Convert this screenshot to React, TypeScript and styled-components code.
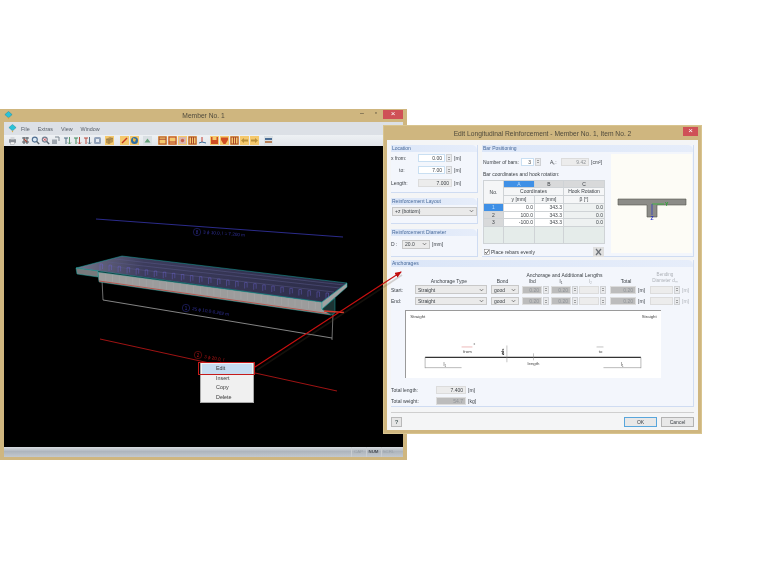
import React from 'react'
import styled, { createGlobalStyle, css } from 'styled-components'

const GlobalStyle = createGlobalStyle`
  html, body {
    margin: 0;
    padding: 0;
    background: #fff;
  }
  body {
    font-family: "Liberation Sans", Arial, sans-serif;
    color: #3d4247;
  }
`

type ToolKind = 'print' | 'cross' | 'zoom' | 'zoomRed' | 'frame' | 'axisG' | 'axisR' | 'axisB' | 'cube' | 'box' | 'pen' | 'globe' | 'tri' | 'band' | 'bandRed' | 'dot' | 'bars' | 'corner' | 'tee' | 'vee' | 'arrowL' | 'arrow' | 'flag'

const ToolGlyph = ({ kind }: { kind: ToolKind }) => {
  switch (kind) {
    case 'print':
      return <g><rect x="1" y="3" width="7" height="4" rx="1" fill="#8b9097" /><rect x="2.5" y="1" width="4" height="2.5" fill="#d6d9de" /><rect x="2.5" y="6" width="4" height="2.5" fill="#f4f4f4" stroke="#8b9097" strokeWidth=".4" /></g>
    case 'cross':
      return <g stroke="#5a6168" strokeWidth="1.1"><path d="M1 2h7M1 6h7M3 1v7M6 1v7" /><path d="M3 3l3 3" stroke="#b04b3a" /></g>
    case 'zoom':
      return <g fill="none" stroke="#4f6f92" strokeWidth="1.1"><circle cx="3.8" cy="3.6" r="2.5" fill="#dbe8f3" /><path d="M5.6 5.5l2.6 2.6" stroke="#5b6570" strokeWidth="1.4" /></g>
    case 'zoomRed':
      return <g fill="none" stroke="#6f7f92" strokeWidth="1.1"><circle cx="3.8" cy="3.6" r="2.5" fill="#f1dde0" /><path d="M2.6 2.4l2.4 2.4M5 2.4L2.6 4.8" stroke="#c23b45" strokeWidth=".8" /><path d="M5.6 5.5l2.6 2.6" stroke="#5b6570" strokeWidth="1.4" /></g>
    case 'frame':
      return <g><rect x="1" y="3.5" width="5" height="4.5" fill="#9da5ae" /><path d="M4 1h4v4" fill="none" stroke="#7b858f" /></g>
    case 'axisG':
      return <g fill="none" strokeWidth="1"><path d="M1 2h4M3 2v6" stroke="#4e6f83" /><path d="M6.5 1v7M5 6.5l1.5 1.5L8 6.5" stroke="#5c9a6a" /></g>
    case 'axisR':
      return <g fill="none" strokeWidth="1"><path d="M1 2h4M3 2v6" stroke="#3f8a58" /><path d="M6.5 1v7M5 6.5l1.5 1.5L8 6.5" stroke="#b94a3e" /></g>
    case 'axisB':
      return <g fill="none" strokeWidth="1"><path d="M1 2h4M3 2v6" stroke="#b94a3e" /><path d="M6.5 1v7M5 6.5l1.5 1.5L8 6.5" stroke="#4e6f83" /></g>
    case 'cube':
      return <g fill="#93a3bb"><rect x="1" y="1" width="7" height="7" rx="1.5" /><rect x="3" y="3" width="3" height="3" fill="#e6ebf2" /></g>
    case 'box':
      return <g><path d="M1 3l4-2 3 1v4l-4 2-3-1z" fill="#b9934f" /><path d="M1 3l3 1 4-2M4 4v4" fill="none" stroke="#7f6a45" strokeWidth=".5" /></g>
    case 'pen':
      return <path d="M2 7l5-5" stroke="#c73a22" strokeWidth="1.5" />
    case 'globe':
      return <g><circle cx="4.5" cy="4.5" r="3.5" fill="#2f6ea5" /><path d="M3 2l3 1-1 3-2-1z" fill="#e9b73e" /></g>
    case 'tri':
      return <path d="M4.5 2.5L7.5 6.5h-6z" fill="#62a078" />
    case 'band':
      return <g fill="none" stroke="#a8482c"><rect x="1" y="1" width="7" height="7" /><path d="M1 3.2h7" /></g>
    case 'bandRed':
      return <g fill="none" stroke="#b23c28"><rect x="1" y="1" width="7" height="7" /><path d="M1 6h7" /></g>
    case 'dot':
      return <g><rect x="1" y="1" width="7" height="7" fill="#d8b5ac" /><circle cx="4.5" cy="4.5" r="1.7" fill="#c65f4b" /></g>
    case 'bars':
      return <g fill="none" stroke="#a8482c"><rect x="1" y="1" width="7" height="7" /><path d="M3.5 1v7M5.5 1v7" /></g>
    case 'corner':
      return <g fill="none" strokeWidth="1"><path d="M4 1v5" stroke="#c43a2e" /><path d="M1 7l3-1 4 1" stroke="#3a6c9a" /></g>
    case 'tee':
      return <path d="M1 1h1.5v3h4V1H8v7H1z" fill="#cf4d22" />
    case 'vee':
      return <path d="M1 1.5h7V4L5.5 8h-2L1 4z" fill="#cf4d22" />
    case 'arrowL':
      return <path d="M8 3.5H4V2L1 4.5 4 7V5.5h4z" fill="#b9903a" />
    case 'arrow':
      return <path d="M1 3.5h4V2l3 2.5L5 7V5.5H1z" fill="#b9903a" />
    case 'flag':
      return <g><rect x="1" y="2" width="7" height="2" fill="#4a6c93" /><rect x="1" y="5" width="7" height="2" fill="#b9825a" /></g>
  }
}

const toolGroups: { gap: number; tools: { kind: ToolKind; lit?: boolean; wash?: boolean }[] }[] = [
  { gap: 3, tools: [{ kind: 'print' }] },
  { gap: 4, tools: [{ kind: 'cross' }, { kind: 'zoom' }, { kind: 'zoomRed' }, { kind: 'frame' }] },
  { gap: 3, tools: [{ kind: 'axisG' }, { kind: 'axisR' }, { kind: 'axisB' }, { kind: 'cube' }] },
  { gap: 3, tools: [{ kind: 'box', lit: true }] },
  { gap: 6, tools: [{ kind: 'pen', lit: true }, { kind: 'globe', lit: true }] },
  { gap: 4, tools: [{ kind: 'tri', wash: true }] },
  { gap: 6, tools: [{ kind: 'band', lit: true }, { kind: 'bandRed', lit: true }, { kind: 'dot', lit: true }, { kind: 'bars', lit: true }] },
  { gap: 1, tools: [{ kind: 'corner' }] },
  { gap: 3, tools: [{ kind: 'tee', lit: true }, { kind: 'vee', lit: true }, { kind: 'bars', lit: true }, { kind: 'arrowL', lit: true }, { kind: 'arrow', lit: true }] },
  { gap: 5, tools: [{ kind: 'flag', wash: true }] },
]

const AppLogo = () => (
  <LogoSvg viewBox="0 0 10 10">
    <path d="M5 .5L9 4 5 7.5 1 4z" fill="#29c3d8" stroke="#1a7f95" strokeWidth=".5" />
    <path d="M4 7.5h2L5 9.5z" fill="#e8a72c" />
  </LogoSvg>
)

const BeamScene = () => {
  const stirrups = Array.from({ length: 26 }, (_, i) => {
    const t = i / 25
    return { x: 100 + t * 226, y: 270 + t * 29 }
  })
  const cells = Array.from({ length: 34 }, (_, i) => {
    const t = i / 33
    return { x: 99 + t * 223, y: 273 + t * 30 }
  })
  return (
    <SceneSvg viewBox="4 146 399 301">
      <defs>
        <linearGradient id="deckFill" x1="0" x2="1" y1="0" y2="0">
          <stop offset="0" stopColor="#74748a" />
          <stop offset=".25" stopColor="#3c3c5c" />
          <stop offset="1" stopColor="#2c2c48" />
        </linearGradient>
      </defs>
      <path d="M96 219L343 237" stroke="#30309a" strokeWidth=".9" />
      <circle cx="197" cy="232" r="3.7" fill="none" stroke="#30309a" strokeWidth=".5" />
      <text x="197" y="233.5" fontSize="4.5" fill="#30309a" textAnchor="middle">8</text>
      <text x="203" y="233.5" fontSize="4.6" fill="#30309a" transform="rotate(4 203 233)">3 ϕ 10.0, l = 7.200 m</text>

      <path d="M102 280L103 300M333 313L332 340" stroke="#b5b5b5" strokeWidth=".6" />
      <path d="M103 300L332 338" stroke="#bdbdbd" strokeWidth=".7" />
      <circle cx="186" cy="308" r="3.7" fill="none" stroke="#30309a" strokeWidth=".5" />
      <text x="186" y="310" fontSize="4.5" fill="#30309a" textAnchor="middle">1</text>
      <text x="192" y="310" fontSize="4.6" fill="#30309a" transform="rotate(9 192 310)">25 ϕ 10.0-0.282 m</text>

      <path d="M98 272L322 302V309L331 315L99 282z" fill="#9c9c9c" stroke="#179c98" strokeWidth=".45" />
      {cells.map((c) => (
        <path key={c.x} d={`M${c.x} ${c.y}v7.5`} stroke="#b0b0b0" strokeWidth=".35" />
      ))}
      <path d="M99 281L331 314" stroke="#c43a2e" strokeWidth=".7" />
      <path d="M322 309L335 298V313L331 315z" fill="#1c3434" stroke="#17a09c" strokeWidth=".5" />
      <path d="M76 268L122 256L347 283L322 302L98 271z" fill="url(#deckFill)" stroke="#17a8a3" strokeWidth=".5" />
      <path d="M76 268L77 274L98 277V271z" fill="#77797c" stroke="#17a8a3" strokeWidth=".5" />
      <path d="M322 302V309L347 287V283z" fill="#a2a2a2" stroke="#17a8a3" strokeWidth=".5" />
      <path d="M98 265L334 292M108 262L340 288M115 259L344 285" stroke="#5a5a8a" strokeWidth=".5" fill="none" />
      {stirrups.map((s) => (
        <path key={s.x} d={`M${s.x} ${s.y}v-6h2.5v5`} stroke="#6f66d8" strokeWidth=".4" fill="none" />
      ))}
      <path d="M324 311L344 312.5" stroke="#d8392a" strokeWidth="1.6" />

      <path d="M100 339L337 391" stroke="#b01515" strokeWidth=".9" />
      <circle cx="198" cy="355" r="3.7" fill="none" stroke="#b01515" strokeWidth=".5" />
      <text x="198" y="357" fontSize="4.5" fill="#b01515" textAnchor="middle">2</text>
      <text x="204" y="358" fontSize="4.6" fill="#b01515" transform="rotate(10 204 358)">3 ϕ 20.0, l</text>
    </SceneSvg>
  )
}

const AnchorDrawing = () => (
  <DrawingSvg viewBox="405 310 256 68">
    <text x="408" y="317" fontSize="4.4" fill="#444">Straight</text>
    <text x="658" y="317" fontSize="4.4" fill="#444" textAnchor="end">Straight</text>
    <path d="M460 346.5H471" stroke="#e28b8b" strokeWidth=".6" />
    <text x="472" y="345" fontSize="3.5" fill="#666">x</text>
    <text x="466" y="352.5" fontSize="4.4" fill="#444" textAnchor="middle">from</text>
    <path d="M597 346.5H604" stroke="#999" strokeWidth=".6" />
    <text x="601" y="352.5" fontSize="4.4" fill="#444" textAnchor="middle">to</text>
    <path d="M423 357H642" stroke="#333" strokeWidth="1.3" />
    <path d="M506 345V362M533 353V360" stroke="#888" strokeWidth=".5" />
    <text x="503" y="355" fontSize="4.2" fill="#333" fontWeight="bold" transform="rotate(-90 503 355)">⌀ds</text>
    <path d="M423 357V368M642 357V368M423 367.5H460M604 367.5H642" stroke="#777" strokeWidth=".5" />
    <text x="533" y="365" fontSize="4.4" fill="#444" textAnchor="middle">length</text>
    <text x="443" y="366" fontSize="4.6" fill="#444" textAnchor="middle">l₁</text>
    <text x="623" y="366" fontSize="4.6" fill="#444" textAnchor="middle">l₁</text>
  </DrawingSvg>
)

const SectionPreview = () => (
  <PreviewSvg viewBox="611 154 81 99">
    <path d="M618 199H686V205H657V217H647V205H618z" fill="#8c8c88" stroke="#55564f" strokeWidth=".6" />
    <path d="M652 204H664" stroke="#22c32b" strokeWidth=".7" />
    <text x="665" y="206" fontSize="5" fill="#22a82b" fontWeight="bold">Y</text>
    <path d="M652 204V215" stroke="#2430c8" strokeWidth=".7" />
    <text x="650.5" y="219.5" fontSize="5" fill="#2430c8" fontWeight="bold">Z</text>
  </PreviewSvg>
)

const Spin = ({ value, w, tone, dim }: { value?: string; w: number; tone?: 'white' | 'grey' | 'dark'; dim?: boolean }) => (
  <SpinBox $w={w}>
    <Field $tone={tone ?? 'white'} $dim={dim}>{value}</Field>
    <SpinArrows>
      <SpinArrow $up />
      <SpinArrow />
    </SpinArrows>
  </SpinBox>
)

const Combo = ({ value, w }: { value: string; w: number }) => (
  <ComboBox $w={w}>
    <span>{value}</span>
    <ComboCaret viewBox="0 0 6 4"><path d="M1 1l2 2 2-2" fill="none" stroke="#444" strokeWidth=".8" /></ComboCaret>
  </ComboBox>
)

const anchorRows = ['Start:', 'End:']
const barRows = [
  { no: '1', y: '0.0', z: '343.3', b: '0.0', active: true },
  { no: '2', y: '100.0', z: '343.3', b: '0.0' },
  { no: '3', y: '-100.0', z: '343.3', b: '0.0' },
]

export default function App() {
  return (
    <Desktop>
      <GlobalStyle />
      <MainWindow>
        <TitleBar $h={13}>
          <AppLogo />
          <TitleText>Member No. 1</TitleText>
          <WinButtons>
            <MiniButton>–</MiniButton>
            <MiniButton>▫</MiniButton>
            <CloseButton $w={20}>×</CloseButton>
          </WinButtons>
        </TitleBar>
        <MenuBar>
          <AppLogo />
          <MenuItem>File</MenuItem>
          <MenuItem>Extras</MenuItem>
          <MenuItem>View</MenuItem>
          <MenuItem>Window</MenuItem>
        </MenuBar>
        <Toolbar>
          {toolGroups.map((group, g) => (
            <ToolGroup key={g} $gap={group.gap}>
              {group.tools.map((tool, i) => (
                <ToolButton key={i} $lit={tool.lit} $wash={tool.wash} viewBox="0 0 9 9">
                  <ToolGlyph kind={tool.kind} />
                </ToolButton>
              ))}
            </ToolGroup>
          ))}
        </Toolbar>
        <Viewport>
          <BeamScene />
        </Viewport>
        <StatusBar>
          <StatusCell>CAP</StatusCell>
          <StatusCell $on>NUM</StatusCell>
          <StatusCell>SCRL</StatusCell>
        </StatusBar>
      </MainWindow>

      <ContextMenu>
        <ContextItem $active>Edit</ContextItem>
        <ContextItem>Insert</ContextItem>
        <ContextItem>Copy</ContextItem>
        <ContextItem>Delete</ContextItem>
      </ContextMenu>

      <Dialog>
        <TitleBar $h={14}>
          <TitleText>Edit Longitudinal Reinforcement - Member No. 1, Item No. 2</TitleText>
          <WinButtons>
            <CloseButton $w={15}>×</CloseButton>
          </WinButtons>
        </TitleBar>
        <DialogBody>
          <TopRow>
            <LeftColumn>
              <Panel $h={48}>
                <PanelTitle>Location</PanelTitle>
                <LocationGrid>
                  <Label>x from:</Label>
                  <Spin value="0.00" w={34} />
                  <Unit>[m]</Unit>
                  <Label $indent>to:</Label>
                  <Spin value="7.00" w={34} />
                  <Unit>[m]</Unit>
                  <LengthLabel>Length:</LengthLabel>
                  <LengthField $tone="grey">7.000</LengthField>
                  <LengthUnit>[m]</LengthUnit>
                </LocationGrid>
              </Panel>
              <Panel $h={26}>
                <PanelTitle>Reinforcement Layout</PanelTitle>
                <PanelPad>
                  <Combo value="+z (bottom)" w={85} />
                </PanelPad>
              </Panel>
              <Panel $h={28}>
                <PanelTitle>Reinforcement Diameter</PanelTitle>
                <DiameterRow>
                  <DiameterLabel>D :</DiameterLabel>
                  <Combo value="20.0" w={28} />
                  <Unit>[mm]</Unit>
                </DiameterRow>
              </Panel>
            </LeftColumn>
            <Panel $h={112}>
              <PanelTitle>Bar Positioning</PanelTitle>
              <BarLayout>
                <BarColumn>
                  <BarCountRow>
                    <BarCountLabel>Number of bars:</BarCountLabel>
                    <Spin value="3" w={20} />
                    <AreaLabel>Aₛ:</AreaLabel>
                    <AreaField $tone="grey" $dim>9.42</AreaField>
                    <Unit>[cm²]</Unit>
                  </BarCountRow>
                  <Label>Bar coordinates and hook rotation:</Label>
                  <BarTable>
                    <colgroup>
                      <col width="20" />
                      <col width="31" />
                      <col width="29" />
                      <col width="41" />
                    </colgroup>
                    <thead>
                      <tr>
                        <HeadCell rowSpan={3} $tall>No.</HeadCell>
                        <ColumnLetter $active>A</ColumnLetter>
                        <ColumnLetter>B</ColumnLetter>
                        <ColumnLetter>C</ColumnLetter>
                      </tr>
                      <tr>
                        <HeadCell colSpan={2}>Coordinates</HeadCell>
                        <HeadCell>Hook Rotation</HeadCell>
                      </tr>
                      <tr>
                        <HeadCell>y [mm]</HeadCell>
                        <HeadCell>z [mm]</HeadCell>
                        <HeadCell>β [°]</HeadCell>
                      </tr>
                    </thead>
                    <tbody>
                      {barRows.map((row) => (
                        <tr key={row.no}>
                          <RowNumber $active={row.active}>{row.no}</RowNumber>
                          <DataCell>{row.y}</DataCell>
                          <DataCell>{row.z}</DataCell>
                          <DataCell $muted>{row.b}</DataCell>
                        </tr>
                      ))}
                      <tr>
                        <FillerCell />
                        <FillerCell />
                        <FillerCell />
                        <FillerCell />
                      </tr>
                    </tbody>
                  </BarTable>
                  <EvenRow>
                    <CheckLabel>
                      <CheckBox viewBox="0 0 6 6">
                        <rect x=".3" y=".3" width="5.4" height="5.4" fill="#fff" stroke="#777" strokeWidth=".5" />
                        <path d="M1.2 3l1.2 1.5L4.8 1.2" fill="none" stroke="#333" strokeWidth=".8" />
                      </CheckBox>
                      Place rebars evenly
                    </CheckLabel>
                    <IconButton viewBox="0 0 11 10">
                      <rect width="11" height="10" fill="#dfdfdf" />
                      <path d="M3 2l5 6M8 2L3 8" stroke="#6d7278" strokeWidth="1.2" />
                    </IconButton>
                  </EvenRow>
                </BarColumn>
                <SectionPreview />
              </BarLayout>
            </Panel>
          </TopRow>

          <Panel $h={147}>
            <PanelTitle>Anchorages</PanelTitle>
            <AnchorHead>
              <LengthsHead>Anchorage and Additional Lengths</LengthsHead>
              <BendHead>Bending<br />Diameter dₘ</BendHead>
              <HeadSpacer />
              <ColHead>Anchorage Type</ColHead>
              <ColHead>Bond</ColHead>
              <ColHead>lbd</ColHead>
              <ColHead>l₁</ColHead>
              <ColHead $faint>l₂</ColHead>
              <ColHead>Total</ColHead>
            </AnchorHead>
            <AnchorRows>
              {anchorRows.map((row) => (
                <React.Fragment key={row}>
                  <Label>{row}</Label>
                  <Combo value="Straight" w={72} />
                  <Combo value="good" w={28} />
                  <Spin value="0.20" w={27} tone="dark" dim />
                  <Spin value="0.20" w={27} tone="dark" dim />
                  <Spin w={27} tone="grey" />
                  <UnitCell>
                    <DarkField $tone="dark" $dim>0.20</DarkField>
                    <Unit>[m]</Unit>
                  </UnitCell>
                  <UnitCell>
                    <Spin w={30} tone="grey" />
                    <Unit $faint>[m]</Unit>
                  </UnitCell>
                </React.Fragment>
              ))}
            </AnchorRows>
            <AnchorDrawing />
            <TotalsGrid>
              <Label>Total length:</Label>
              <TotalField $tone="grey">7.400</TotalField>
              <Unit>[m]</Unit>
              <Label>Total weight:</Label>
              <TotalField $tone="dark" $dim>54.7</TotalField>
              <Unit>[kg]</Unit>
            </TotalsGrid>
          </Panel>

          <Footer>
            <HelpButton>?</HelpButton>
            <FooterActions>
              <ActionButton $primary>OK</ActionButton>
              <ActionButton>Cancel</ActionButton>
            </FooterActions>
          </Footer>
        </DialogBody>
      </Dialog>

      <ArrowLayer viewBox="0 0 760 570">
        <defs>
          <marker id="arrowHead" markerUnits="userSpaceOnUse" markerWidth="7" markerHeight="6" refX="6" refY="3" orient="auto">
            <path d="M0 .2L7 3 0 5.8z" fill="#c00d0d" />
          </marker>
        </defs>
        <path d="M256 368L401 273" stroke="#5a4a35" strokeWidth="1.6" opacity=".22" transform="translate(1 2)" />
        <path d="M255 367L401 272" stroke="#c80f0f" strokeWidth="1.2" markerEnd="url(#arrowHead)" />
      </ArrowLayer>
      <EditMark />
    </Desktop>
  )
}

const anchorColumns = css`
  display: grid;
  grid-template-columns: 24px 76px 31px 29px 28px 31px 40px 44px;
  align-items: center;
`

const Desktop = styled.div`
  position: relative;
  width: 760px;
  height: 570px;
  overflow: hidden;
  background: #fff;
  filter: blur(0.3px);
`

const MainWindow = styled.section`
  position: absolute;
  left: 0;
  top: 109px;
  width: 407px;
  height: 351px;
  box-sizing: border-box;
  padding: 0 4px 3px;
  display: flex;
  flex-direction: column;
  background: #cfb67f;
`

const Dialog = styled.section`
  position: absolute;
  left: 384px;
  top: 126px;
  width: 317px;
  height: 307px;
  box-sizing: border-box;
  padding: 0 3px 3px;
  display: flex;
  flex-direction: column;
  background: #cfb67f;
  box-shadow: 0 0 0 1px #d8c48f;
`

const TitleBar = styled.header<{ $h: number }>`
  position: relative;
  flex: none;
  height: ${(p) => p.$h}px;
  display: flex;
  align-items: center;
  justify-content: center;
`

const LogoSvg = styled.svg`
  width: 9px;
  height: 9px;
  flex: none;
  header > & {
    position: absolute;
    left: 0;
    top: 2px;
  }
`

const TitleText = styled.h1`
  margin: 0;
  font-size: 6.7px;
  font-weight: 400;
  color: #4f4a3c;
  white-space: nowrap;
`

const WinButtons = styled.div`
  position: absolute;
  right: 0;
  top: 0;
  display: flex;
  align-items: flex-start;
`

const MiniButton = styled.span`
  width: 14px;
  height: 9px;
  font-size: 7px;
  line-height: 8px;
  text-align: center;
  color: #4c4636;
`

const CloseButton = styled.span<{ $w: number }>`
  width: ${(p) => p.$w}px;
  height: 9px;
  background: #cf5157;
  color: #fff;
  font-size: 8px;
  line-height: 8px;
  text-align: center;
  margin-top: 1px;
`

const MenuBar = styled.nav`
  flex: none;
  height: 13px;
  display: flex;
  align-items: center;
  gap: 8px;
  padding-left: 4px;
  background: #dce0e6;
  svg {
    margin-right: -4px;
  }
`

const MenuItem = styled.span`
  font-size: 5.4px;
  color: #59606a;
`

const Toolbar = styled.div`
  flex: none;
  height: 11px;
  display: flex;
  align-items: center;
  padding-left: 1px;
  background: linear-gradient(#eef1f4, #e0e4e9);
`

const ToolGroup = styled.div<{ $gap: number }>`
  display: flex;
  gap: 1px;
  margin-left: ${(p) => p.$gap}px;
`

const ToolButton = styled.svg<{ $lit?: boolean; $wash?: boolean }>`
  width: 9px;
  height: 9px;
  background: ${(p) => (p.$lit ? '#f5c96e' : p.$wash ? '#d9dfe3' : 'transparent')};
`

const Viewport = styled.main`
  flex: 1;
  min-height: 0;
  background: #000;
`

const SceneSvg = styled.svg`
  display: block;
  width: 100%;
  height: 100%;
  font-family: "Liberation Sans", Arial, sans-serif;
`

const StatusBar = styled.footer`
  flex: none;
  height: 10px;
  display: flex;
  justify-content: flex-end;
  gap: 1px;
  padding-right: 8px;
  box-sizing: border-box;
  background: linear-gradient(#d9dde2, #aeb5bd 45%, #c3c8ce);
`

const StatusCell = styled.span<{ $on?: boolean }>`
  width: 13px;
  font-size: 4.4px;
  line-height: 10px;
  text-align: center;
  font-weight: ${(p) => (p.$on ? 700 : 400)};
  color: ${(p) => (p.$on ? '#4a4f57' : '#98a0a8')};
  border-left: 1px solid #c9cdd2;
`

const ContextMenu = styled.ul`
  position: absolute;
  left: 200px;
  top: 362px;
  width: 54px;
  height: 41px;
  box-sizing: border-box;
  margin: 0;
  padding: 1px;
  list-style: none;
  display: flex;
  flex-direction: column;
  background: #f0f0f0;
  border: 1px solid #a9a9a9;
`

const ContextItem = styled.li<{ $active?: boolean }>`
  height: 9.6px;
  padding-left: 14px;
  font-size: 5.4px;
  line-height: 9.6px;
  color: #3a3a3a;
  background: ${(p) => (p.$active ? '#c6dcf0' : 'transparent')};
`

const EditMark = styled.div`
  position: absolute;
  left: 198px;
  top: 362px;
  width: 57px;
  height: 13px;
  box-sizing: border-box;
  border: 1px solid #c61a1a;
`

const ArrowLayer = styled.svg`
  position: absolute;
  left: 0;
  top: 0;
  width: 760px;
  height: 570px;
  pointer-events: none;
`

const DialogBody = styled.div`
  flex: 1;
  min-height: 0;
  box-sizing: border-box;
  padding: 5px 4px 0;
  display: flex;
  flex-direction: column;
  gap: 3px;
  background: #f4f5f6;
`

const TopRow = styled.div`
  display: grid;
  grid-template-columns: 87px 212px;
  gap: 4px;
`

const LeftColumn = styled.div`
  display: flex;
  flex-direction: column;
  gap: 5px;
`

const Panel = styled.div<{ $h: number }>`
  height: ${(p) => p.$h}px;
  box-sizing: border-box;
  background: #f3f6fc;
  border-right: 1px solid #cfdcf2;
  border-bottom: 1px solid #cfdcf2;
  font-size: 5px;
`

const PanelTitle = styled.h2`
  margin: 0;
  height: 7px;
  padding-left: 1px;
  font-size: 5px;
  font-weight: 400;
  line-height: 7px;
  color: #45689a;
  border-top-right-radius: 5px;
  background: linear-gradient(90deg, #dbe6f8, #e6edfa);
`

const LocationGrid = styled.div`
  display: grid;
  grid-template-columns: 27px 34px auto;
  grid-auto-rows: 8px;
  row-gap: 4px;
  align-items: center;
  padding-top: 2px;
`

const Label = styled.span<{ $indent?: boolean }>`
  font-size: 5px;
  white-space: nowrap;
  padding-left: ${(p) => (p.$indent ? 8 : 0)}px;
  color: #3d4247;
`

const LengthLabel = styled(Label)`
  margin-top: 2px;
`

const DiameterLabel = styled(Label)`
  width: 11px;
`

const BarCountLabel = styled(Label)`
  width: 38px;
`

const Unit = styled.span<{ $faint?: boolean }>`
  font-size: 5px;
  padding-left: 2px;
  white-space: nowrap;
  color: ${(p) => (p.$faint ? '#aeb2b8' : '#3d4247')};
`

const LengthUnit = styled(Unit)`
  margin-top: 2px;
`

const Field = styled.span<{ $tone: 'white' | 'grey' | 'dark'; $dim?: boolean }>`
  display: block;
  box-sizing: border-box;
  height: 8px;
  padding-right: 2px;
  text-align: right;
  font-size: 5px;
  line-height: 7px;
  color: ${(p) => (p.$dim ? '#8f9398' : '#3d4247')};
  background: ${(p) => (p.$tone === 'white' ? '#fff' : p.$tone === 'dark' ? '#bcbcbc' : '#ececec')};
  border: 1px solid ${(p) => (p.$tone === 'white' ? '#c9dff2' : '#dcdcdc')};
`

const LengthField = styled(Field)`
  margin-top: 2px;
`

const SpinBox = styled.div<{ $w: number }>`
  width: ${(p) => p.$w}px;
  display: grid;
  grid-template-columns: 1fr 6px;
  gap: 1px;
`

const SpinArrows = styled.div`
  height: 8px;
  box-sizing: border-box;
  display: flex;
  flex-direction: column;
  align-items: center;
  justify-content: center;
  gap: 1px;
  background: #e9eaec;
  border: 1px solid #d0d2d5;
`

const SpinArrow = styled.span<{ $up?: boolean }>`
  width: 0;
  height: 0;
  border-left: 1.5px solid transparent;
  border-right: 1.5px solid transparent;
  border-${(p) => (p.$up ? 'bottom' : 'top')}: 1.5px solid #555;
`

const ComboBox = styled.div<{ $w: number }>`
  width: ${(p) => p.$w}px;
  height: 8.5px;
  box-sizing: border-box;
  padding: 0 2px;
  display: flex;
  align-items: center;
  justify-content: space-between;
  font-size: 5px;
  color: #3d4247;
  background: #eaeaea;
  border: 1px solid #c8c8c8;
`

const ComboCaret = styled.svg`
  width: 5px;
  height: 4px;
`

const PanelPad = styled.div`
  padding: 2px 1px;
`

const DiameterRow = styled.div`
  display: flex;
  align-items: center;
  padding-top: 4px;
`

const BarLayout = styled.div`
  display: flex;
  gap: 7px;
  padding: 2px 0 0 1px;
`

const BarColumn = styled.div`
  width: 121px;
  display: flex;
  flex-direction: column;
  gap: 3px;
`

const BarCountRow = styled.div`
  display: flex;
  align-items: center;
  height: 13px;
  width: 140px;
  margin-top: 1px;
`

const AreaLabel = styled.span`
  font-size: 5px;
  width: 11px;
  padding-left: 9px;
`

const AreaField = styled(Field)`
  width: 28px;
`

const BarTable = styled.table`
  width: 121px;
  height: 64px;
  table-layout: fixed;
  border-collapse: collapse;
  font-size: 5px;
  text-align: center;
  td, th {
    padding: 0;
    font-size: 5px;
    font-weight: 400;
    line-height: 6px;
    border: 1px solid #cfd3d6;
  }
`

const HeadCell = styled.th<{ $tall?: boolean }>`
  height: 7px;
  background: #f5f6f7;
  vertical-align: ${(p) => (p.$tall ? 'middle' : 'baseline')};
  overflow: hidden;
  white-space: nowrap;
`

const ColumnLetter = styled.th<{ $active?: boolean }>`
  height: 6px;
  background: ${(p) => (p.$active ? '#3f90e6' : '#d8d9da')};
  color: ${(p) => (p.$active ? '#bcdcfa' : '#3d4247')};
`

const RowNumber = styled.td<{ $active?: boolean }>`
  height: 6.5px;
  background: ${(p) => (p.$active ? '#3f90e6' : '#d8d9da')};
  color: ${(p) => (p.$active ? '#bcdcfa' : '#3d4247')};
`

const DataCell = styled.td<{ $muted?: boolean }>`
  height: 6.5px;
  text-align: right;
  padding-right: 1px !important;
  background: ${(p) => (p.$muted ? '#eef1f1' : '#fff')};
`

const FillerCell = styled.td`
  background: #e5ecea;
`

const EvenRow = styled.div`
  height: 10px;
  display: flex;
  align-items: center;
  justify-content: space-between;
`

const CheckLabel = styled.label`
  display: flex;
  align-items: center;
  gap: 1px;
  padding-left: 1px;
  font-size: 5px;
`

const CheckBox = styled.svg`
  width: 6px;
  height: 6px;
`

const IconButton = styled.svg`
  width: 11px;
  height: 10px;
`

const PreviewSvg = styled.svg`
  width: 81px;
  height: 99px;
  flex: none;
  background: #fdfcf6;
  font-family: "Liberation Sans", Arial, sans-serif;
`

const AnchorHead = styled.div`
  ${anchorColumns}
  grid-template-rows: 7px 6px;
  padding-top: 4px;
`

const AnchorRows = styled.div`
  ${anchorColumns}
  grid-template-rows: 11px 12px;
`

const LengthsHead = styled.span`
  grid-column: 3 / 8;
  grid-row: 1;
  font-size: 5px;
  text-align: center;
  white-space: nowrap;
  padding-right: 12px;
`

const BendHead = styled.span`
  grid-column: 8;
  grid-row: 1 / 3;
  width: 30px;
  font-size: 4.6px;
  line-height: 6px;
  text-align: center;
  color: #aeb2b8;
  white-space: nowrap;
`

const HeadSpacer = styled.span`
  grid-row: 2;
`

const ColHead = styled.span<{ $faint?: boolean }>`
  grid-row: 2;
  font-size: 5px;
  text-align: center;
  white-space: nowrap;
  padding-right: 8px;
  color: ${(p) => (p.$faint ? '#aeb2b8' : '#3d4247')};
`

const UnitCell = styled.div`
  display: flex;
  align-items: center;
`

const DarkField = styled(Field)`
  width: 26px;
`

const DrawingSvg = styled.svg`
  display: block;
  width: 256px;
  height: 68px;
  margin: 3px 0 0 14px;
  box-sizing: border-box;
  background: #fff;
  border-left: 1px solid #9a9a9a;
  border-top: 1px solid #9a9a9a;
  font-family: "Liberation Sans", Arial, sans-serif;
`

const TotalsGrid = styled.div`
  display: grid;
  grid-template-columns: 45px 30px auto;
  grid-auto-rows: 9px;
  row-gap: 2px;
  align-items: center;
  padding-top: 7px;
`

const TotalField = styled(Field)`
  width: 30px;
`

const Footer = styled.div`
  margin-top: 2px;
  padding-top: 4px;
  display: flex;
  align-items: center;
  justify-content: space-between;
  border-top: 1px solid #cfcfcf;
`

const HelpButton = styled.button`
  width: 11px;
  height: 10px;
  padding: 0;
  font: 700 6px "Liberation Sans", Arial, sans-serif;
  color: #566;
  background: #e6e6e6;
  border: 1px solid #b9b9b9;
`

const FooterActions = styled.div`
  display: flex;
  gap: 4px;
`

const ActionButton = styled.button<{ $primary?: boolean }>`
  width: 33px;
  height: 10px;
  padding: 0;
  font: 400 5px "Liberation Sans", Arial, sans-serif;
  color: #3d4247;
  background: #e8e8e8;
  border: 1px solid ${(p) => (p.$primary ? '#58a6dc' : '#b3b3b3')};
`
